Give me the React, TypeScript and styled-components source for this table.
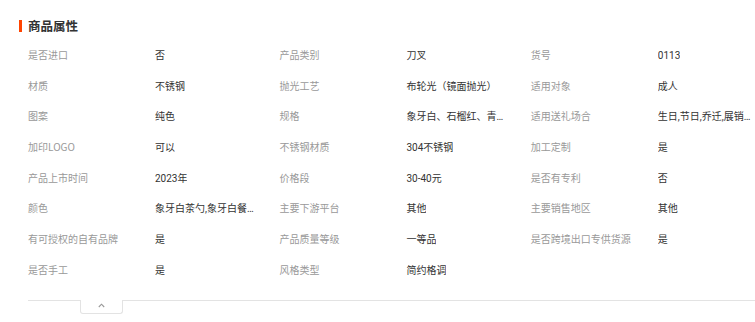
import styled, { createGlobalStyle } from "styled-components";

type Attr = { label: string; value: string };

const attrs: Attr[] = [
  { label: "是否进口", value: "否" },
  { label: "产品类别", value: "刀叉" },
  { label: "货号", value: "0113" },
  { label: "材质", value: "不锈钢" },
  { label: "抛光工艺", value: "布轮光（镜面抛光）" },
  { label: "适用对象", value: "成人" },
  { label: "图案", value: "纯色" },
  { label: "规格", value: "象牙白、石榴红、青花蓝" },
  { label: "适用送礼场合", value: "生日,节日,乔迁,展销会,开业" },
  { label: "加印LOGO", value: "可以" },
  { label: "不锈钢材质", value: "304不锈钢" },
  { label: "加工定制", value: "是" },
  { label: "产品上市时间", value: "2023年" },
  { label: "价格段", value: "30-40元" },
  { label: "是否有专利", value: "否" },
  { label: "颜色", value: "象牙白茶勺,象牙白餐叉" },
  { label: "主要下游平台", value: "其他" },
  { label: "主要销售地区", value: "其他" },
  { label: "有可授权的自有品牌", value: "是" },
  { label: "产品质量等级", value: "一等品" },
  { label: "是否跨境出口专供货源", value: "是" },
  { label: "是否手工", value: "是" },
  { label: "风格类型", value: "简约格调" },
];

export default function App() {
  return (
    <>
      <GlobalStyle />
      <Section>
        <Header>
          <Bar />
          <Title>商品属性</Title>
        </Header>
        <Grid>
          {attrs.map((a) => (
            <Cell key={a.label}>
              <Label>{a.label}</Label>
              <Value title={a.value}>{a.value}</Value>
            </Cell>
          ))}
        </Grid>
        <Footer>
          <Line $w="52px" />
          <Tab>
            <svg width="7" height="5" viewBox="0 0 7 5">
              <polyline
                points="0.8,4 3.5,1.2 6.2,4"
                fill="none"
                stroke="#999"
                strokeWidth="1.1"
              />
            </svg>
          </Tab>
          <Line />
        </Footer>
      </Section>
    </>
  );
}

const GlobalStyle = createGlobalStyle`
  body {
    margin: 0;
    background: #fff;
    font-family: "Noto Sans CJK SC", "Liberation Sans", sans-serif;
    overflow: hidden;
  }
`;

const Section = styled.div`
  width: 790px;
  padding-top: 18px;
`;

const Header = styled.div`
  display: flex;
  align-items: center;
  height: 16px;
  padding-left: 19px;
  gap: 6px;
`;

const Bar = styled.div`
  width: 3px;
  height: 12px;
  background: #ff4400;
`;

const Title = styled.div`
  font-size: 12.5px;
  font-weight: 700;
  color: #333;
  line-height: 16px;
`;

const Grid = styled.div`
  display: grid;
  grid-template-columns: repeat(3, 251.4px);
  grid-auto-rows: 30.7px;
  padding-left: 28px;
  margin-top: 5.6px;
`;

const Cell = styled.div`
  display: flex;
  align-items: baseline;
  padding-top: 8.3px;
  font-size: 10px;
  line-height: 14px;
`;

const Label = styled.div`
  width: 127px;
  flex: none;
  color: #999;
  white-space: nowrap;
`;

const Value = styled.div`
  max-width: 99px;
  color: #333;
  font-family: Roboto, "Noto Sans CJK SC", sans-serif;
  white-space: nowrap;
  overflow: hidden;
  text-overflow: ellipsis;
`;

const Footer = styled.div`
  display: flex;
  margin-left: 28px;
  margin-top: 15px;
`;

const Line = styled.div<{ $w?: string }>`
  flex: ${(p) => (p.$w ? `0 0 ${p.$w}` : "1")};
  border-top: 1px solid #e3e3e3;
`;

const Tab = styled.div`
  width: 41px;
  height: 10px;
  padding-top: 3px;
  border: 1px solid #e3e3e3;
  border-top: none;
  border-radius: 0 0 3px 3px;
  display: flex;
  justify-content: center;
`;
